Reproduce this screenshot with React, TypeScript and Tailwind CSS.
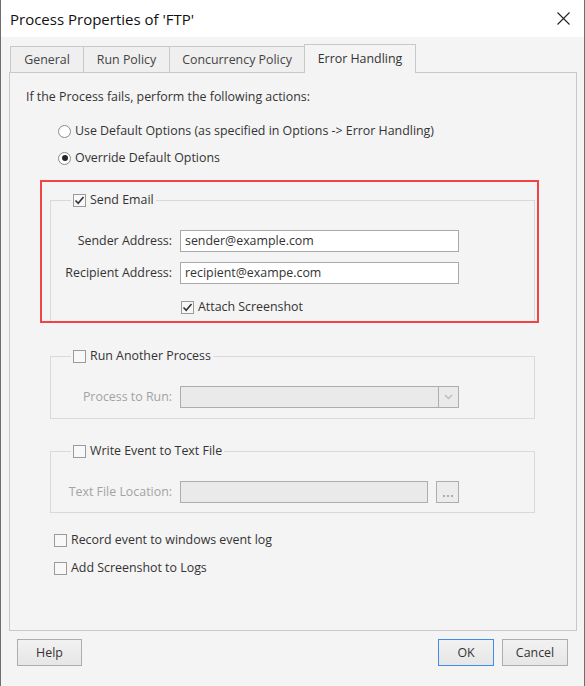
import React from "react"

const font = { fontFamily: '"Open Sans", "Noto Sans", sans-serif' }

function Radio({ checked }: { checked?: boolean }) {
    return (
        <span className="flex items-center justify-center w-[13px] h-[13px] rounded-full border border-[#8a8a8a] bg-white shrink-0">
            {checked && <span className="w-[6px] h-[6px] rounded-full bg-[#262626]" />}
        </span>
    )
}

function Check({ checked }: { checked?: boolean }) {
    return (
        <span className="flex items-center justify-center w-[13px] h-[13px] border border-[#9a9a9a] bg-[#f8f8f8] shrink-0">
            {checked && (
                <svg width="11" height="11" viewBox="0 0 11 11">
                    <path d="M1.5 5.5 L4.2 8.3 L9.5 2" fill="none" stroke="#333" strokeWidth="1.6" />
                </svg>
            )}
        </span>
    )
}

function Tab({ label, active, w }: { label: string; active?: boolean; w: string }) {
    return (
        <div
            className={
                active
                    ? `${w} h-[29px] -mb-px flex items-center justify-center border border-b-0 border-[#c8c8c8] bg-[#f4f4f4] text-[#333] relative z-10`
                    : `${w} h-[26px] flex items-center justify-center border border-r-0 border-b-0 border-[#c8c8c8] bg-[#efefef] text-[#444]`
            }
        >
            {label}
        </div>
    )
}

function Field({ label, value }: { label: string; value?: string }) {
    return (
        <div className="flex items-center">
            <div className="w-[127px] text-right pr-[8px] text-[#333]">{label}</div>
            <div className="w-[279px] h-[22px] flex items-center px-[4px] border border-[#a9a9a9] bg-white text-[#333]">
                {value}
            </div>
        </div>
    )
}

export default function App() {
    return (
        <div className="w-[585px] h-[686px] bg-[#f4f4f4] border-x border-[#6e6e6e] flex flex-col text-[12.4px] leading-[16px]" style={font}>
            {/* Title bar */}
            <div className="h-[37px] bg-white flex items-center justify-between pl-[9px] pr-[14px] shrink-0">
                <span className="text-[15px] text-[#111]">Process Properties of 'FTP'</span>
                <svg width="13" height="13" viewBox="0 0 13 13">
                    <path d="M0.5 0.5 L12.5 12.5 M12.5 0.5 L0.5 12.5" stroke="#222" strokeWidth="1.1" />
                </svg>
            </div>

            {/* Tabs */}
            <div className="flex items-end ml-[9px] mt-[7px]">
                <Tab label="General" w="w-[73px]" />
                <Tab label="Run Policy" w="w-[86px]" />
                <Tab label="Concurrency Policy" w="w-[135px]" />
                <Tab label="Error Handling" w="w-[112px]" active />
            </div>

            {/* Panel */}
            <div className="ml-[8px] w-[568px] h-[559px] border border-[#c8c8c8] bg-[#f4f4f4] pt-[16px] text-[#333]">
                <div className="pl-[16px]">If the Process fails, perform the following actions:</div>

                <div className="flex items-center gap-[4px] ml-[48px] mt-[18px]">
                    <Radio />
                    <span>Use Default Options (as specified in Options -&gt; Error Handling)</span>
                </div>
                <div className="flex items-center gap-[4px] ml-[48px] mt-[11px]">
                    <Radio checked />
                    <span>Override Default Options</span>
                </div>

                {/* Highlighted Send Email group */}
                <div className="ml-[30px] mt-[14px] w-[499px] h-[143px] border-2 border-[#f24444] pt-[10px] pl-[8px]">
                    <fieldset className="w-[485px] h-[129px] border border-b-0 border-[#d9d9d9] pl-[2px]">
                        <legend className="ml-[18px] px-[2px] flex items-center gap-[4px]">
                            <Check checked />
                            <span>Send Email</span>
                        </legend>
                        <div className="mt-[22px] flex flex-col gap-[10px]">
                            <Field label="Sender Address:" value="sender@example.com" />
                            <Field label="Recipient Address:" value="recipient@exampe.com" />
                        </div>
                        <div className="flex items-center gap-[4px] ml-[128px] mt-[15px]">
                            <Check checked />
                            <span>Attach Screenshot</span>
                        </div>
                    </fieldset>
                </div>

                {/* Run Another Process */}
                <fieldset className="ml-[40px] mt-[25px] w-[485px] h-[71px] border border-[#d9d9d9] pl-[2px]">
                    <legend className="ml-[18px] px-[2px] flex items-center gap-[4px]">
                        <Check />
                        <span>Run Another Process</span>
                    </legend>
                    <div className="mt-[22px] flex items-center">
                        <div className="w-[127px] text-right pr-[8px] text-[#a3a3a3]">Process to Run:</div>
                        <div className="w-[279px] h-[22px] flex border border-[#adadad] bg-[#eaeaea]">
                            <div className="flex-1" />
                            <div className="w-[20px] border-l border-[#adadad] flex items-center justify-center">
                                <svg width="9" height="6" viewBox="0 0 9 6">
                                    <path d="M1 1 L4.5 4.5 L8 1" fill="none" stroke="#bdbdbd" strokeWidth="1.5" />
                                </svg>
                            </div>
                        </div>
                    </div>
                </fieldset>

                {/* Write Event to Text File */}
                <fieldset className="ml-[40px] mt-[24px] w-[485px] h-[70px] border border-[#d9d9d9] pl-[2px]">
                    <legend className="ml-[18px] px-[2px] flex items-center gap-[4px]">
                        <Check />
                        <span>Write Event to Text File</span>
                    </legend>
                    <div className="mt-[22px] flex items-center">
                        <div className="w-[127px] text-right pr-[8px] text-[#a3a3a3]">Text File Location:</div>
                        <div className="w-[248px] h-[22px] border border-[#adadad] bg-[#eaeaea]" />
                        <div className="ml-[8px] w-[23px] h-[22px] border border-[#adadad] bg-[#ececec] flex items-end justify-center pb-[5px]">
                            <span className="flex gap-[2px]">
                                <span className="w-[2px] h-[2px] bg-[#aaa]" />
                                <span className="w-[2px] h-[2px] bg-[#aaa]" />
                                <span className="w-[2px] h-[2px] bg-[#aaa]" />
                            </span>
                        </div>
                    </div>
                </fieldset>

                <div className="flex items-center gap-[4px] ml-[44px] mt-[19px]">
                    <Check />
                    <span>Record event to windows event log</span>
                </div>
                <div className="flex items-center gap-[4px] ml-[44px] mt-[12px]">
                    <Check />
                    <span>Add Screenshot to Logs</span>
                </div>
            </div>

            {/* Buttons */}
            <div className="flex items-center mt-[8px] pl-[16px] pr-[16px] text-[#333]">
                <button className="w-[65px] h-[27px] border border-[#adadad] bg-gradient-to-b from-[#f2f2f2] to-[#e6e6e6]">Help</button>
                <div className="flex-1" />
                <button className="w-[56px] h-[27px] border border-[#3d8ee8] bg-gradient-to-b from-[#f2f2f2] to-[#e6e6e6]">OK</button>
                <button className="ml-[8px] w-[66px] h-[27px] border border-[#adadad] bg-gradient-to-b from-[#f2f2f2] to-[#e6e6e6]">Cancel</button>
            </div>
        </div>
    )
}
